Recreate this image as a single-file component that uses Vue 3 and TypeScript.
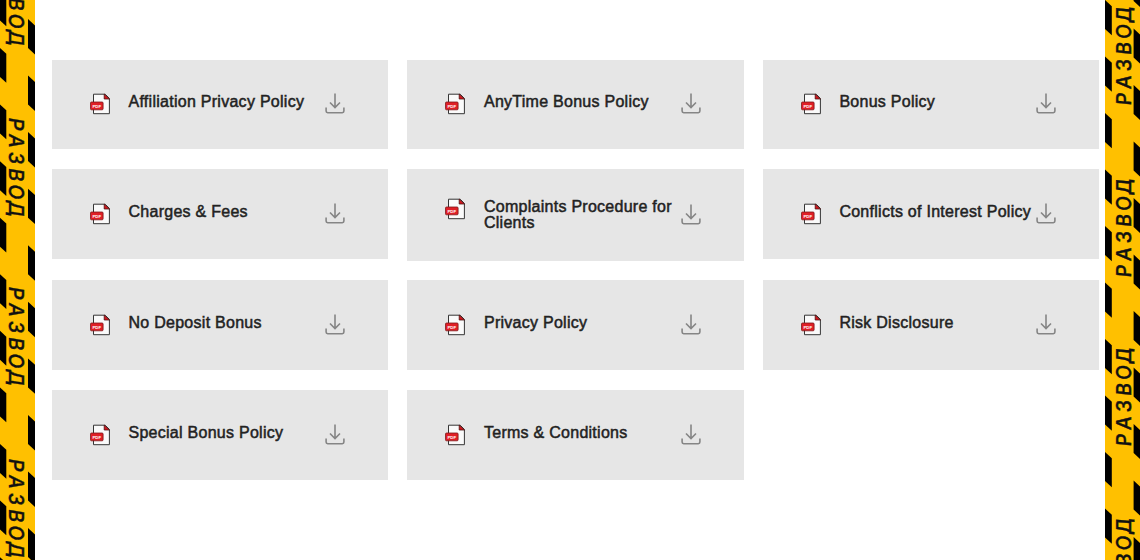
<template>
	<main class="page">
		<aside class="tape">
			<svg viewBox="0 0 35 560">
				<path v-for="n in 11" :key="'a' + n" :d="stripe(-0.5, 6.3, -65.6 + n * 56.57)"/>
				<path v-for="n in 11" :key="'b' + n" :d="stripe(28, 35.5, -37.6 + n * 56.57)"/>
				<g v-for="y in leftWords" :key="y" :transform="`translate(9.3 ${y}) rotate(90) skewX(-9)`">
					<text v-for="(letter, i) in word" :key="i" :x="i * 16.9 + 6" y="0">{{ letter }}</text>
				</g>
			</svg>
		</aside>

		<section class="documents">
			<a v-for="title in documents" :key="title" class="card" :class="{ tall: title.length > 30 }">
				<svg class="pdf" viewBox="0 0 20 22">
					<path class="paper" d="M3.5 1.2h11.7l4.2 4.2v15.3H3.5z"/>
					<path class="fold" d="M14.2 1v5h5.3z"/>
					<rect class="label" x=".5" y="9" width="12.6" height="7.8" rx="1"/>
					<text x="6.8" y="14.5">PDF</text>
				</svg>
				<span class="title">{{ title }}</span>
				<svg class="download" viewBox="0 0 20 21">
					<path d="M10 .5v14M5 9.5l5 5 5-5M1.1 14.5v3.6q0 1.6 1.6 1.6h14.6q1.6 0 1.6-1.6v-3.6"/>
				</svg>
			</a>
		</section>

		<aside class="tape">
			<svg viewBox="0 0 35 560">
				<path v-for="n in 11" :key="'a' + n" :d="stripe(-0.5, 6.8, -57 + n * 56.5)"/>
				<path v-for="n in 11" :key="'b' + n" :d="stripe(28.6, 35.5, -84.5 + n * 56.5)"/>
				<g v-for="y in rightWords" :key="y" :transform="`translate(25.7 ${y}) rotate(-90) skewX(-5)`">
					<text v-for="(letter, i) in word" :key="i" :x="i * 16.9 + 6" y="0">{{ letter }}</text>
				</g>
			</svg>
		</aside>
	</main>
</template>

<script setup lang="ts">
	const word = 'РАЗВОД'.split('')
	const leftWords: number[] = [-53.5, 117.3, 286.3, 458.3]
	const rightWords: number[] = [105.5, 277.5, 446.5, 617]

	const documents: string[] = [
		'Affiliation Privacy Policy',
		'AnyTime Bonus Policy',
		'Bonus Policy',
		'Charges & Fees',
		'Complaints Procedure for Clients',
		'Conflicts of Interest Policy',
		'No Deposit Bonus',
		'Privacy Policy',
		'Risk Disclosure',
		'Special Bonus Policy',
		'Terms & Conditions'
	]

	// Slanted black mark on the edge of the tape
	function stripe(left: number, right: number, top: number): string {
		const drop = (right - left) * 0.92
		return `M${left} ${top}L${right} ${top + drop}V${top + drop + 29}L${left} ${top + 29}Z`
	}
</script>

<style>
	body
	{
		margin: 0;
		background: #fff;
	}
</style>

<style scoped>
	.page
	{
		display: flex;
		width: 1140px;
		height: 560px;
		overflow: hidden;
		font-family: "Liberation Sans", Arial, sans-serif;
	}

	.tape
	{
		flex: 0 0 35px;
		background: #ffc000;
	}

	.tape svg
	{
		display: block;
		width: 35px;
		height: 560px;
	}

	.tape text
	{
		font-family: Inter, sans-serif;
		font-size: 20.5px;
		font-weight: 500;
		text-anchor: middle;
		fill: #111;
		stroke: #111;
		stroke-width: .4;
	}

	.tape g text
	{
		transform-box: fill-box;
		transform-origin: center;
		transform: scaleX(.95);
	}

	.documents
	{
		flex: 1;
		display: grid;
		grid-template-columns: repeat(3, 336.4px);
		column-gap: 19.05px;
		row-gap: 19.8px;
		align-content: start;
		align-items: start;
		padding: 59.5px 0 0 17px;
	}

	.card
	{
		display: flex;
		align-items: flex-start;
		box-sizing: border-box;
		height: 89.7px;
		padding: 33.8px 41.6px 0 38px;
		background: #e6e6e6;
	}

	.card.tall
	{
		height: 91.6px;
	}

	.pdf
	{
		flex: none;
		width: 20px;
		height: 22px;
	}

	.tall .pdf
	{
		margin-top: -5px;
	}

	.paper
	{
		fill: #fafafa;
		stroke: #353535;
		stroke-width: 1;
	}

	.fold
	{
		fill: #d4141c;
		stroke: #4a1515;
		stroke-width: .8;
	}

	.label
	{
		fill: #e01f26;
		stroke: #7d1a1c;
		stroke-width: .8;
	}

	.pdf text
	{
		font-size: 4.4px;
		font-weight: bold;
		text-anchor: middle;
		fill: #fff;
	}

	.title
	{
		flex: none;
		width: 196.6px;
		margin-left: 18.5px;
		padding-top: 1.2px;
		font-size: 16px;
		line-height: 16px;
		letter-spacing: .27px;
		color: #222;
		-webkit-text-stroke: .5px #222;
	}

	.tall .title
	{
		margin-top: -5px;
	}

	.download
	{
		flex: none;
		width: 20px;
		height: 21px;
		fill: none;
		stroke: #858585;
		stroke-width: 1.6;
	}

	.tall .download
	{
		margin-top: 1px;
	}
</style>
